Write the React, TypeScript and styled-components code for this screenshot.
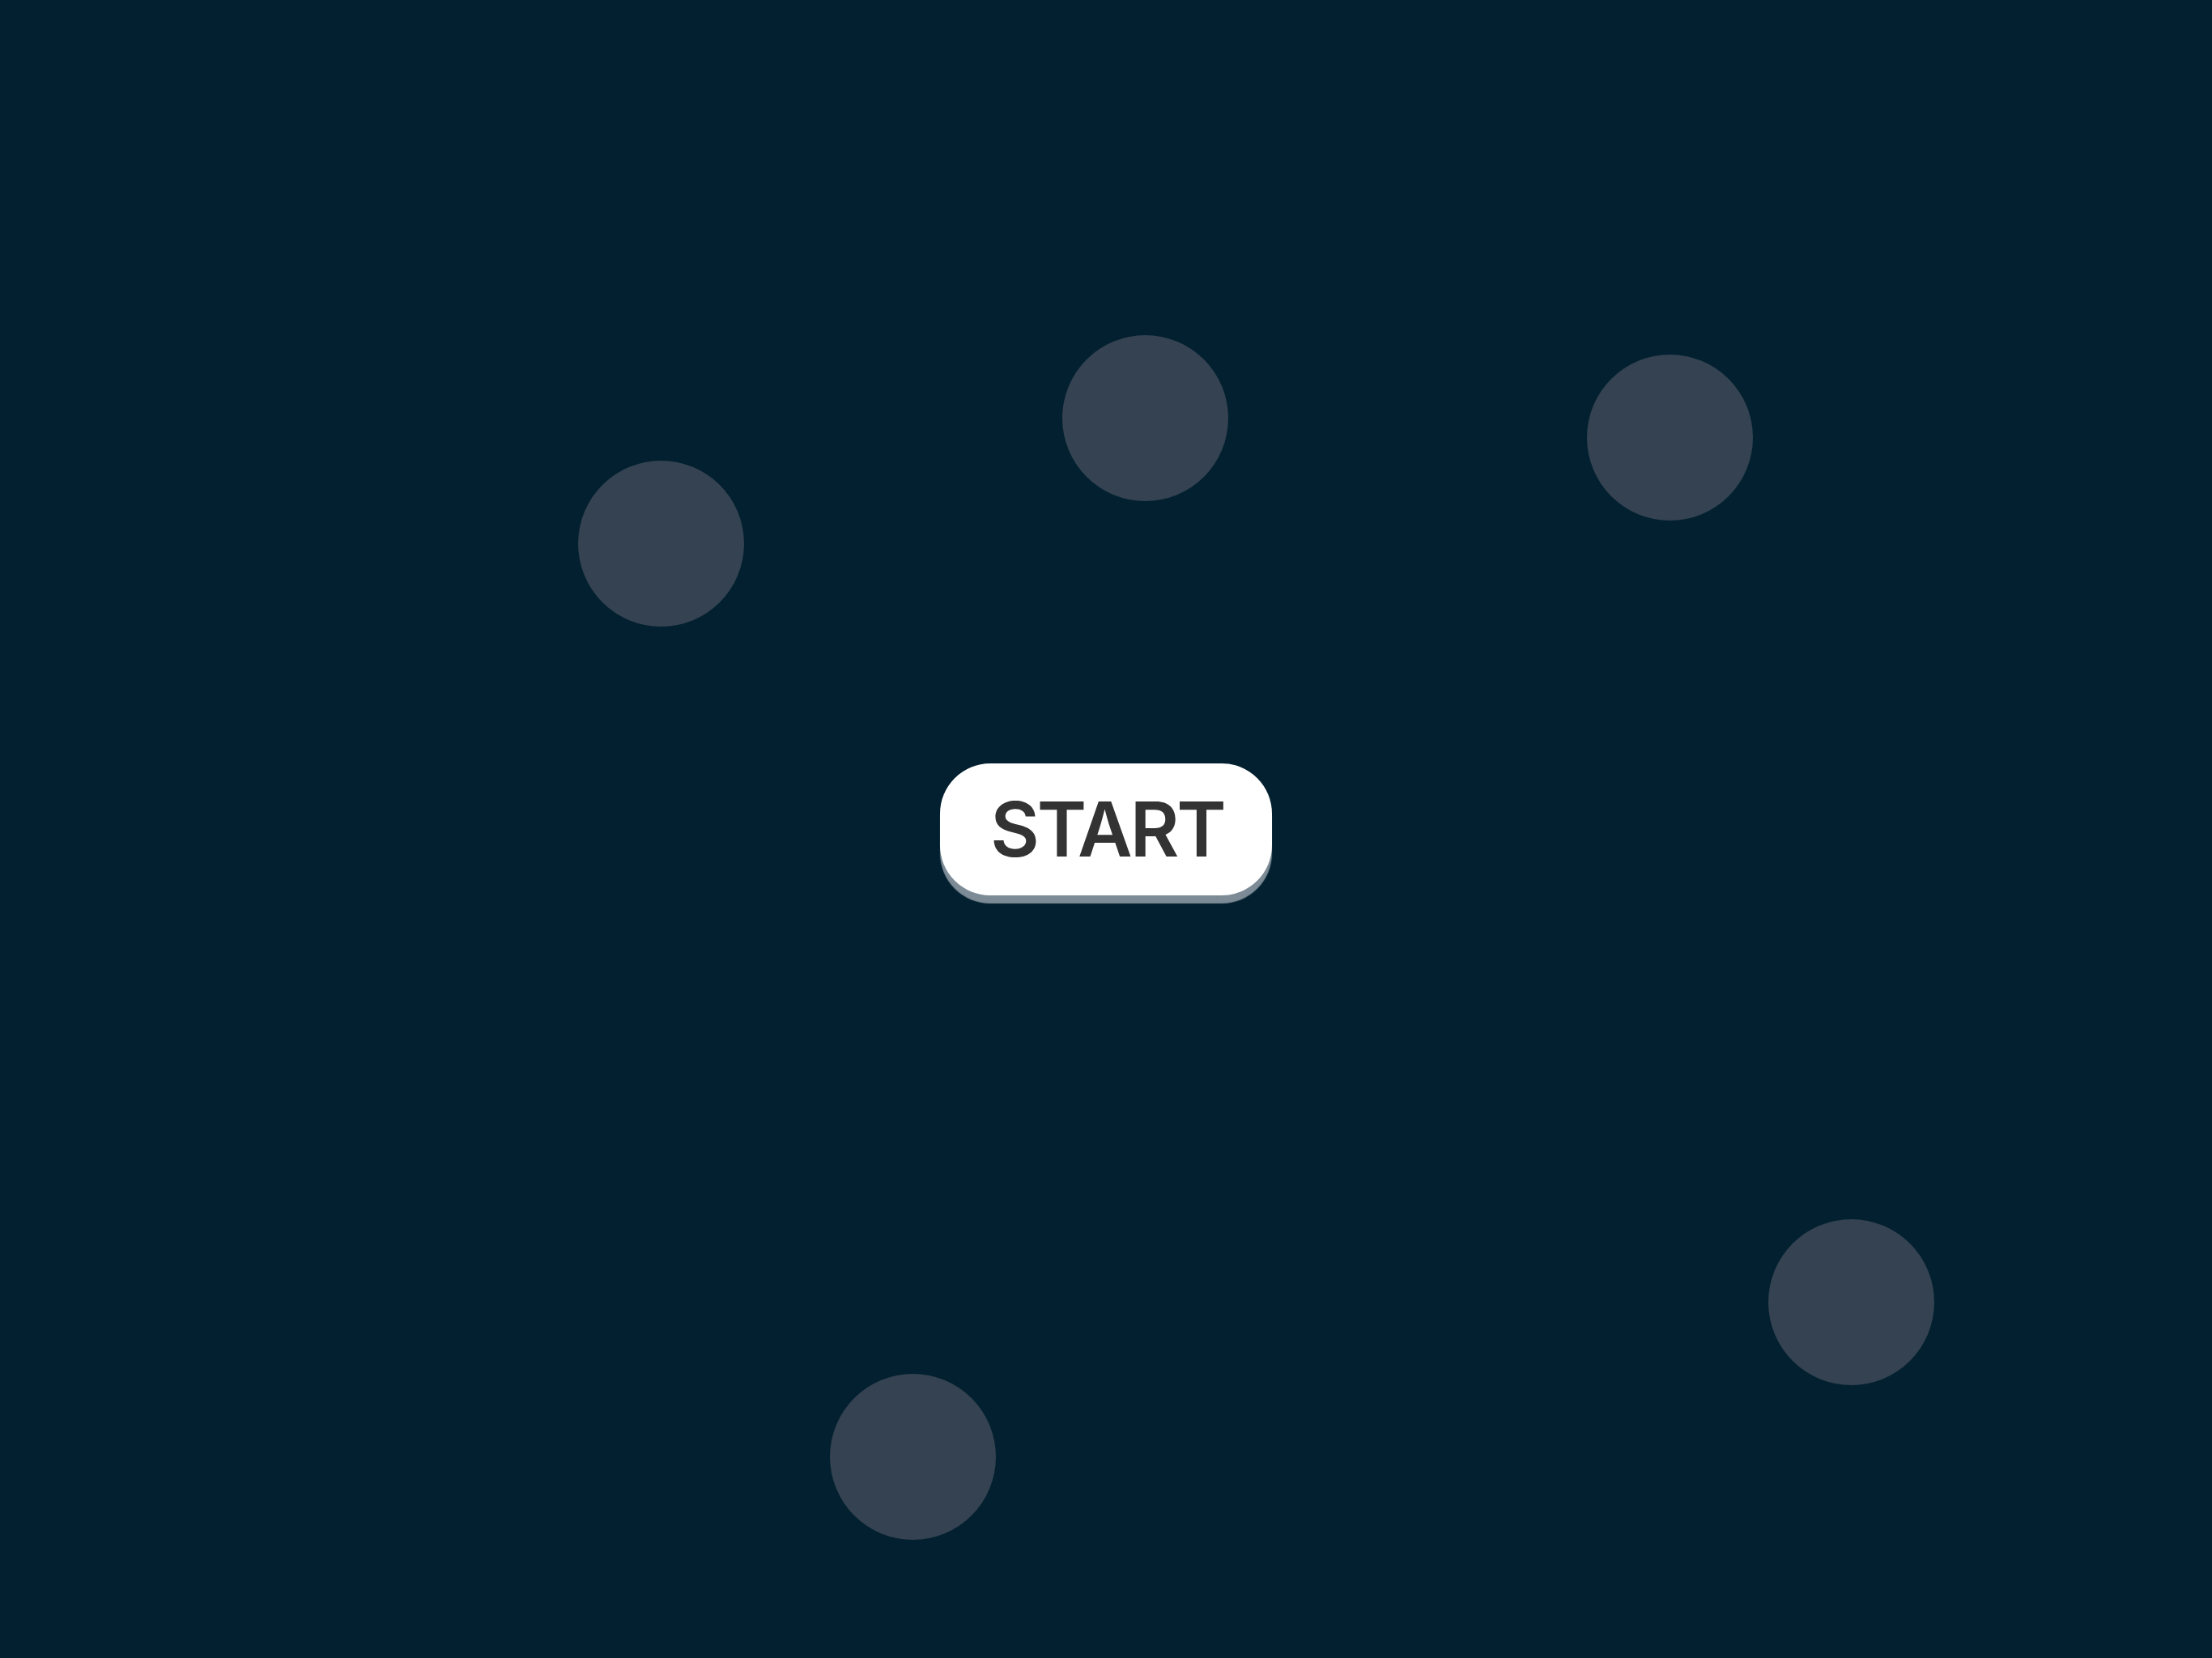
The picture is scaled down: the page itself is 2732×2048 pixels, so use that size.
import styled, { createGlobalStyle } from 'styled-components';

const GlobalStyle = createGlobalStyle`
  html, body {
    margin: 0;
    padding: 0;
    background-color: #02202f;
  }
`;

const Screen = styled.div`
  position: relative;
  width: 100vw;
  height: 100vh;
  overflow: hidden;
  display: flex;
  justify-content: center;
  align-items: center;
  background-color: #02202f;
`;

// floating dots scattered around the stage
const Dot = styled.div<{ x: number; y: number }>`
  position: absolute;
  left: ${props => props.x - 102}px;
  top: ${props => props.y - 102}px;
  width: 205px;
  height: 205px;
  border-radius: 50%;
  background-color: #344252;
`;

const StartButton = styled.button`
  position: relative;
  z-index: 1;
  width: 410px;
  height: 163px;
  border: none;
  border-radius: 62px;
  background-color: #ffffff;
  box-shadow: 0 10px 1px #7d8b96;
  display: flex;
  justify-content: center;
  align-items: center;
  padding: 0 0 0 3px;
  cursor: pointer;
  font-family: Inter, 'Noto Sans', sans-serif;
  font-weight: 600;
  font-size: 93px;
  letter-spacing: -3px;
  color: #333333;
`;

const dots = [
  { x: 816, y: 671 },
  { x: 1414, y: 516 },
  { x: 2062, y: 540 },
  { x: 2286, y: 1608 },
  { x: 1127, y: 1799 },
];

function App() {
  return (
    <>
      <GlobalStyle />
      <Screen>
        {dots.map((d, i) => (
          <Dot key={i} x={d.x} y={d.y} />
        ))}
        <StartButton>START</StartButton>
      </Screen>
    </>
  );
}

export default App;
